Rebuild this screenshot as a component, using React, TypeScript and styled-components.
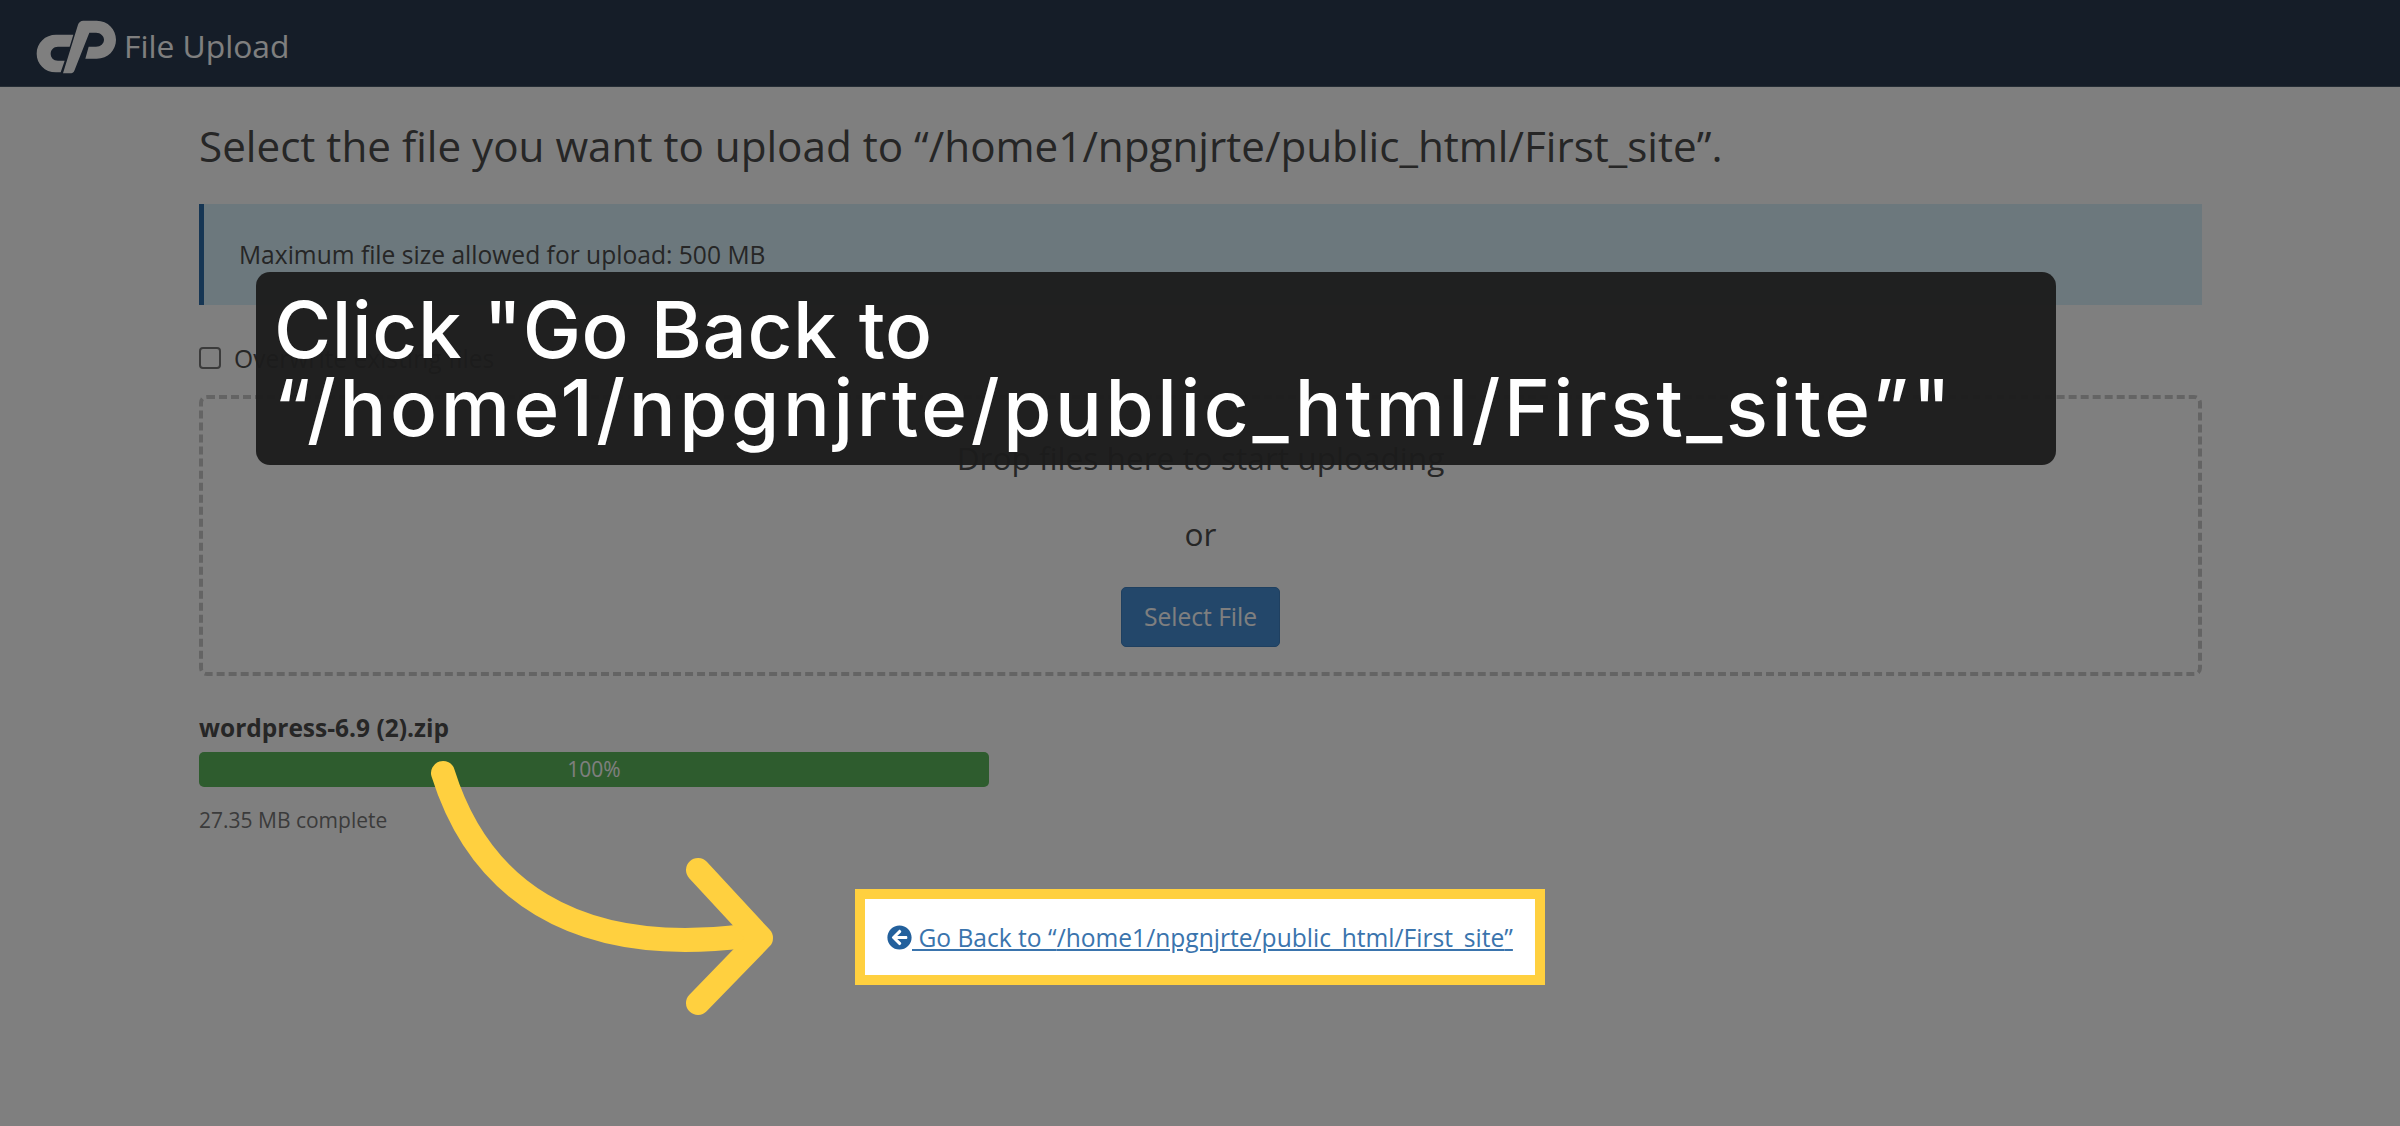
import React from 'react';
import styled, { createGlobalStyle } from 'styled-components';
import { FaArrowCircleLeft } from 'react-icons/fa';

const targetPath = '/home1/npgnjrte/public_html/First_site';

const GlobalStyle = createGlobalStyle`
  * {
    box-sizing: border-box;
  }
  body {
    margin: 0;
    background: #fff;
    font-family: 'Open Sans', 'Liberation Sans', sans-serif;
    color: #4c4c4c;
  }
`;

const Page = styled.div`
  position: relative;
  height: 1126px;
  overflow: hidden;
`;

const Header = styled.header`
  display: flex;
  align-items: center;
  height: 87px;
  padding-left: 30px;
  background: #2a3a50;
  border-bottom: 1px solid #4a5a6a;
`;

const Logo = styled.svg`
  width: 96px;
  height: 68px;
  margin-top: 6px;
  fill: #fff;
`;

const HeaderTitle = styled.span`
  margin: 6px 0 0 -2px;
  font-size: 31.8px;
  line-height: 44px;
  color: #fff;
`;

const Main = styled.main`
  padding: 0 198px 0 199px;
`;

const Title = styled.h1`
  margin: 29px 0 0;
  font-size: 42.2px;
  font-weight: 400;
  line-height: 60px;
`;

const Notice = styled.div`
  display: flex;
  align-items: center;
  height: 101px;
  margin-top: 28px;
  padding: 0 0 0 35px;
  background: #d9f1fa;
  border-left: 5px solid #2d6ca8;
  font-size: 24.6px;
`;

const OverwriteRow = styled.label`
  display: flex;
  align-items: center;
  gap: 13px;
  height: 22px;
  margin-top: 42px;
  font-size: 24.6px;
`;

const Checkbox = styled.span`
  width: 22px;
  height: 22px;
  background: #fff;
  border: 2px solid #767676;
  border-radius: 4px;
`;

const DropZone = styled.div`
  display: flex;
  flex-direction: column;
  align-items: center;
  height: 281px;
  margin-top: 26px;
  padding-top: 35px;
  border: 4px dashed #c8c8c8;
  border-radius: 8px;
`;

const DropText = styled.div`
  font-size: 31.6px;
  line-height: 48px;
`;

const OrText = styled(DropText)`
  margin-top: 28px;
`;

const SelectButton = styled.button`
  width: 159px;
  height: 60px;
  margin-top: 29px;
  padding: 0 0 2px;
  background: #468ed4;
  border: 1px solid #3f80c0;
  border-radius: 5px;
  color: #fff;
  font-family: inherit;
  font-size: 24.6px;
`;

const FileName = styled.div`
  margin-top: 35px;
  font-size: 24.5px;
  font-weight: 700;
  line-height: 34px;
`;

const ProgressBar = styled.div`
  width: 790px;
  height: 35px;
  margin-top: 7px;
  background: #5cb85c;
  border-radius: 5px;
  color: #fff;
  font-size: 21px;
  line-height: 35px;
  text-align: center;
`;

const CompleteText = styled.div`
  margin-top: 16px;
  font-size: 21px;
  line-height: 34px;
  color: #777;
`;

const Scrim = styled.div`
  position: absolute;
  inset: 0;
  background: rgba(0, 0, 0, 0.5);
`;

const Caption = styled.div`
  position: absolute;
  left: 256px;
  top: 272px;
  display: flex;
  align-items: center;
  width: 1800px;
  height: 193px;
  padding: 0 18px;
  background: rgba(27, 27, 27, 0.95);
  border-radius: 14px;
  color: #fff;
  font-family: Inter, 'Noto Sans', sans-serif;
  font-size: 78px;
  font-weight: 500;
  line-height: 78px;
  letter-spacing: 0.6px;
`;

const CaptionPath = styled.span`
  letter-spacing: 3.6px;
`;

const Arrow = styled.svg`
  position: absolute;
  left: 0;
  top: 0;
  width: 2400px;
  height: 1126px;
  fill: none;
  stroke: #ffd03f;
  stroke-width: 24px;
  stroke-linecap: round;
  stroke-linejoin: round;
`;

const Highlight = styled.div`
  position: absolute;
  left: 855px;
  top: 889px;
  display: flex;
  align-items: center;
  width: 690px;
  height: 96px;
  padding-left: 22px;
  background: #fff;
  border: 10px solid #ffd03f;
`;

const BackLink = styled.a`
  display: flex;
  align-items: center;
  color: #3a74ad;
  font-size: 24.6px;
  text-decoration: underline;
  svg {
    flex: none;
    color: #23609c;
  }
`;

const BackText = styled.span`
  white-space: pre;
`;

export default function App() {
  return (
    <Page>
      <GlobalStyle />
      <Header>
        <Logo viewBox="0 0 288 204">
          <path d="M130 68 L119 104 H84 C70 104 62 114 62 125 C62 136 70 146 84 146 H104 L92 181 H78 C44 181 20 155 20 125 C20 92 46 68 78 68 Z" />
          <path d="M144 38 C146 31 152 26 160 26 H200 C234 26 258 52 258 83 C258 114 234 140 200 140 H166 L176 104 H198 C212 104 222 94 222 83 C222 72 212 62 198 62 H178 L133 176 C131 182 126 184 120 184 H99 Z" />
        </Logo>
        <HeaderTitle>File Upload</HeaderTitle>
      </Header>
      <Main>
        <Title>Select the file you want to upload to “{targetPath}”.</Title>
        <Notice>Maximum file size allowed for upload: 500 MB</Notice>
        <OverwriteRow>
          <Checkbox />
          Overwrite existing files
        </OverwriteRow>
        <DropZone>
          <DropText>Drop files here to start uploading</DropText>
          <OrText>or</OrText>
          <SelectButton>Select File</SelectButton>
        </DropZone>
        <FileName>wordpress-6.9 (2).zip</FileName>
        <ProgressBar>100%</ProgressBar>
        <CompleteText>27.35 MB complete</CompleteText>
      </Main>
      <Scrim />
      <Caption>
        <div>
          Click "Go Back to <CaptionPath>“{targetPath}”"</CaptionPath>
        </div>
      </Caption>
      <Arrow viewBox="0 0 2400 1126">
        <path d="M443 773 C478 885 570 958 745 936" />
        <path d="M698 870 L761 938 L698 1003" />
      </Arrow>
      <Highlight>
        <BackLink>
          <FaArrowCircleLeft size={25} />
          <BackText> Go Back to “{targetPath}”</BackText>
        </BackLink>
      </Highlight>
    </Page>
  );
}
